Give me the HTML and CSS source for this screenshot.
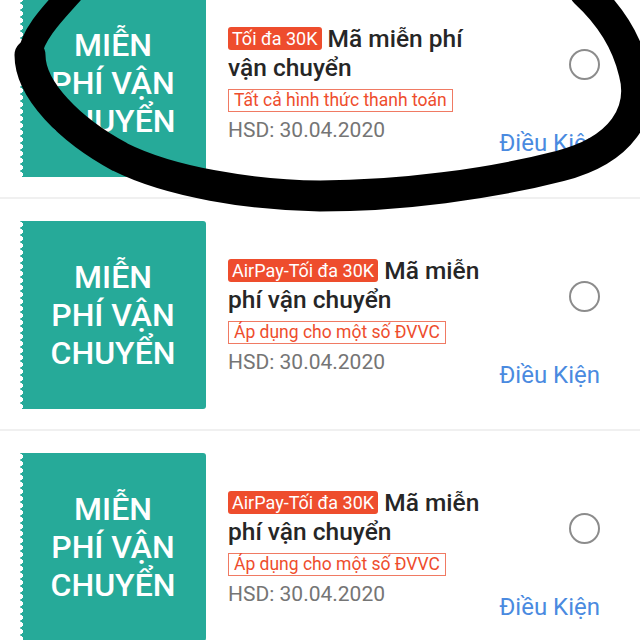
FILE: index.html
```html
<!DOCTYPE html>
<html lang="vi">
<head>
    <meta charset="UTF-8">
    <meta name="viewport" content="width=device-width, initial-scale=1.0">
    <title>Mã miễn phí vận chuyển</title>
    <link rel="stylesheet" href="styles.css">
</head>
<body>
    <div class="voucher-list">
        <div class="voucher">
            <div class="stamp">MIỄN<br>PHÍ VẬN<br>CHUYỂN</div>
            <div class="info">
                <div class="title"><span class="badge">Tối đa 30K</span> Mã miễn phí vận chuyển</div>
                <span class="tag">Tất cả hình thức thanh toán</span>
                <div class="expiry">HSD: 30.04.2020</div>
            </div>
            <div class="side">
                <span class="radio"></span>
                <a class="terms" href="#">Điều Kiện</a>
            </div>
        </div>

        <div class="voucher">
            <div class="stamp">MIỄN<br>PHÍ VẬN<br>CHUYỂN</div>
            <div class="info">
                <div class="title"><span class="badge">AirPay-Tối đa 30K</span> Mã miễn phí vận chuyển</div>
                <span class="tag">Áp dụng cho một số ĐVVC</span>
                <div class="expiry">HSD: 30.04.2020</div>
            </div>
            <div class="side">
                <span class="radio"></span>
                <a class="terms" href="#">Điều Kiện</a>
            </div>
        </div>

        <div class="voucher">
            <div class="stamp">MIỄN<br>PHÍ VẬN<br>CHUYỂN</div>
            <div class="info">
                <div class="title"><span class="badge">AirPay-Tối đa 30K</span> Mã miễn phí vận chuyển</div>
                <span class="tag">Áp dụng cho một số ĐVVC</span>
                <div class="expiry">HSD: 30.04.2020</div>
            </div>
            <div class="side">
                <span class="radio"></span>
                <a class="terms" href="#">Điều Kiện</a>
            </div>
        </div>
    </div>

    <!-- hand drawn marker circle over the first voucher -->
    <svg class="scribble" viewBox="0 0 640 640" xmlns="http://www.w3.org/2000/svg">
        <g fill="none" stroke="#000" stroke-linecap="round" stroke-linejoin="round">
            <path d="M72,-8 C58,8 32,33 30,55" stroke-width="24"/>
            <path d="M30,55 C30,90 70,130 120,157 C170,182 250,195 320,196 C400,196 490,184 560,166 C622,150 645,112 634,72 C627,42 610,15 585,-8" stroke-width="31"/>
        </g>
    </svg>
</body>
</html>
```

FILE: styles.css
```css
html, body {
    margin: 0;
    padding: 0;
    overflow: hidden;
}
body {
    position: relative;
    width: 640px;
    height: 640px;
    background: #fff;
    font-family: Roboto, 'Noto Sans', sans-serif;
    color: #222;
}
.voucher-list {
    margin-top: -33px; /* list is scrolled a little */
}
.voucher {
    display: flex;
    padding: 22px 40px 20px 20px;
    border-bottom: 2px solid #f0f0f0;
}
.stamp {
    position: relative;
    flex: 0 0 186px;
    height: 188px;
    display: flex;
    align-items: center;
    justify-content: center;
    background: #26aa99;
    color: #fff;
    font-size: 32px;
    font-weight: 500;
    line-height: 38px;
    text-align: center;
    border-radius: 0 3px 3px 0;
}
/* scalloped left edge */
.stamp::before {
    content: "";
    position: absolute;
    left: -3px;
    top: 0;
    bottom: 0;
    width: 6px;
    background: radial-gradient(circle at 3px 3.5px, #fff 2.8px, transparent 3.2px) 0 0 / 6px 7px repeat-y;
}
.info {
    width: 265px;
    margin-left: 22px;
    align-self: center;
    display: flex;
    flex-direction: column;
    align-items: flex-start;
}
.title {
    font-size: 24.5px;
    font-weight: 500;
    line-height: 29px;
    color: #262626;
}
.badge {
    display: inline-block;
    padding: 0 4px;
    background: #ee4d2d;
    color: #fff;
    font-size: 18px;
    font-weight: 400;
    line-height: 23px;
    border-radius: 3px;
    vertical-align: 2px;
}
.tag {
    margin-top: 7px;
    padding: 0 5px;
    border: 1px solid #f07a63;
    color: #ee4d2d;
    font-size: 17.5px;
    line-height: 21px;
}
.expiry {
    margin-top: 6px;
    font-size: 21px;
    line-height: 25px;
    color: #757575;
}
.side {
    margin-left: auto;
    display: flex;
    flex-direction: column;
    align-items: flex-end;
}
.radio {
    width: 27px;
    height: 27px;
    margin-top: 60px;
    border: 2px solid #8c8c8c;
    border-radius: 50%;
}
.terms {
    margin-top: 49px;
    font-size: 24px;
    line-height: 28px;
    color: #4a8ae0;
    text-decoration: none;
}
.scribble {
    position: absolute;
    top: 0;
    left: 0;
    width: 640px;
    height: 640px;
    pointer-events: none;
}
```
